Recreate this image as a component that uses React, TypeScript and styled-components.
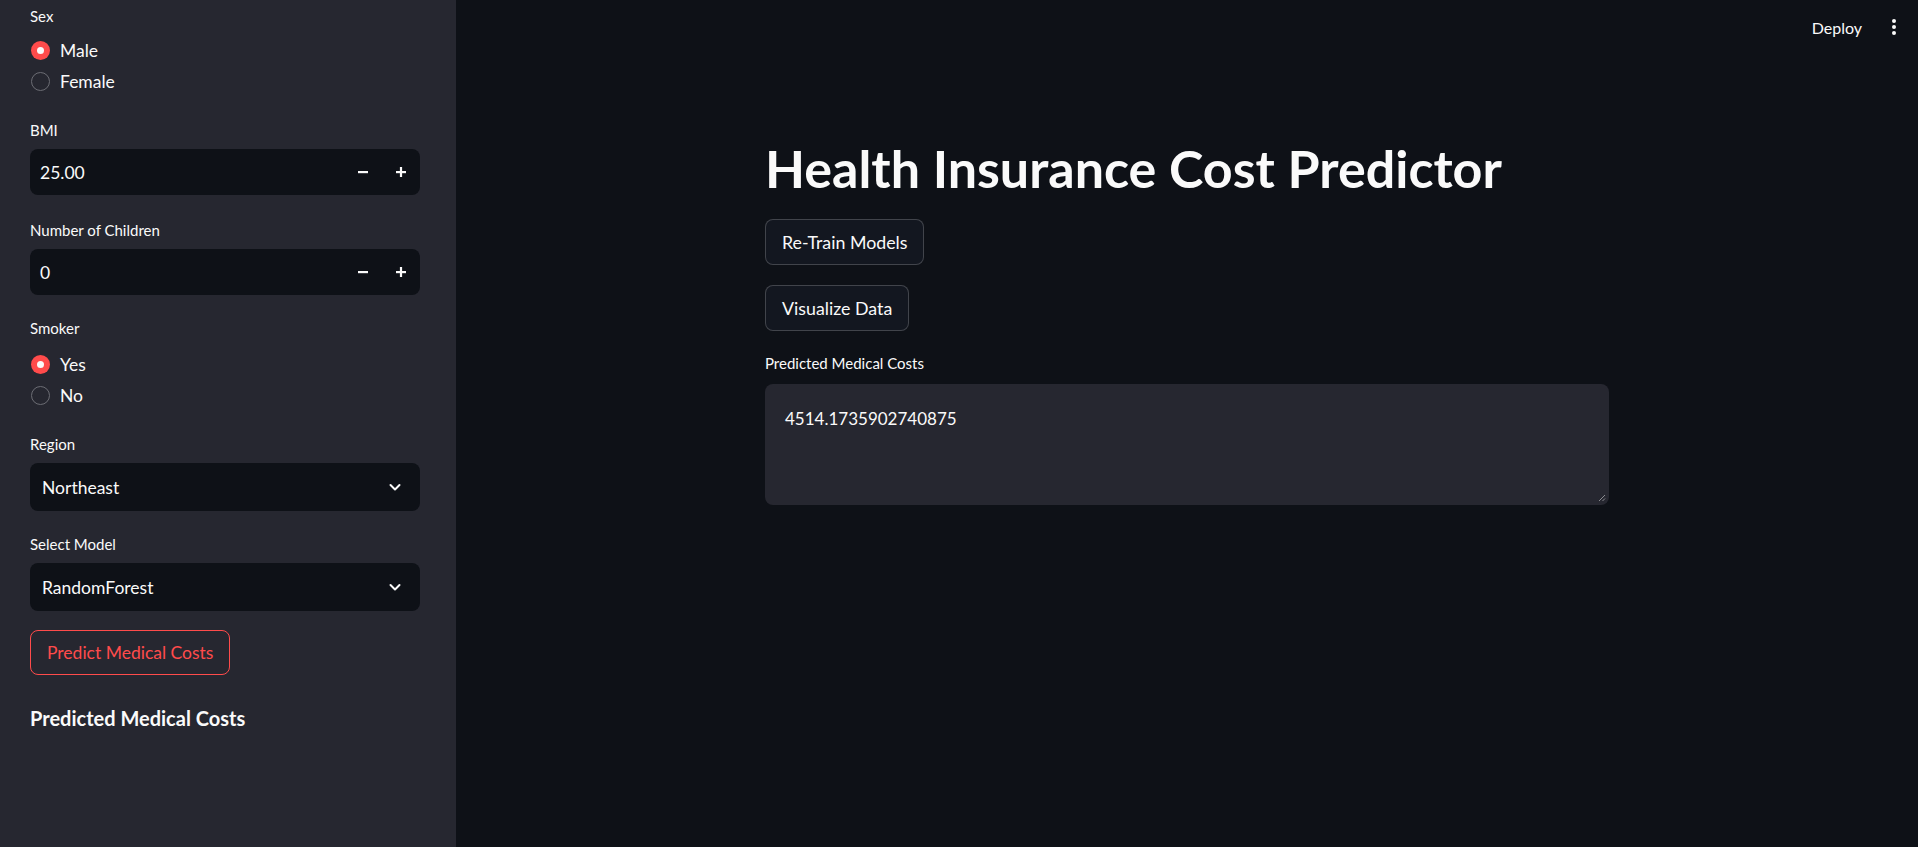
import React from "react";
import styled, { createGlobalStyle } from "styled-components";

const Global = createGlobalStyle`
  html, body { margin: 0; padding: 0; background: #0e1117; }
  body { font-family: Lato, "Noto Sans", sans-serif; color: #fafafa; }
  * { box-sizing: border-box; }
`;

const Page = styled.div`
  display: flex;
  width: 100%;
  height: 847px;
  overflow: hidden;
`;

const Sidebar = styled.aside`
  width: 456px;
  flex-shrink: 0;
  background: #262730;
  padding: 5px 36px 0 30px;
  display: flex;
  flex-direction: column;
  gap: 22px;
`;

const Field = styled.div<{ $gap?: number; $after?: number }>`
  display: flex;
  flex-direction: column;
  gap: ${(p) => p.$gap ?? 8}px;
  margin-bottom: ${(p) => p.$after ?? 0}px;
`;

const Label = styled.div`
  font-size: 15px;
  line-height: 22px;
  height: 22px;
  color: #fafafa;
`;

const RadioList = styled.div`
  display: flex;
  flex-direction: column;
`;

const RadioRow = styled.div`
  display: flex;
  align-items: center;
  gap: 10px;
  height: 31px;
  padding-left: 1px;
  font-size: 17.5px;
`;

const RadioDot = styled.span<{ $on?: boolean }>`
  width: 19px;
  height: 19px;
  border-radius: 50%;
  display: flex;
  align-items: center;
  justify-content: center;
  background: ${(p) => (p.$on ? "#ff4b4b" : "transparent")};
  border: ${(p) => (p.$on ? "none" : "1.5px solid #6c6d74")};
  &::after {
    content: "";
    display: ${(p) => (p.$on ? "block" : "none")};
    width: 7px;
    height: 7px;
    border-radius: 50%;
    background: #fafafa;
  }
`;

const NumberBox = styled.div`
  height: 46px;
  border-radius: 8px;
  background: #0e1117;
  display: flex;
  align-items: center;
  padding-left: 10px;
  font-size: 17.5px;
`;

const NumberValue = styled.span`
  flex: 1;
`;

const StepButton = styled.span`
  width: 38px;
  height: 46px;
  display: flex;
  align-items: center;
  justify-content: center;
`;

const SelectBox = styled.div`
  height: 48px;
  border-radius: 8px;
  background: #0e1117;
  display: flex;
  align-items: center;
  justify-content: space-between;
  padding: 0 18px 0 12px;
  font-size: 17.5px;
`;

const PrimaryOutline = styled.button`
  align-self: flex-start;
  height: 45px;
  margin-top: -3px;
  padding: 0 16px;
  border-radius: 8px;
  border: 1px solid #ff4b4b;
  background: transparent;
  color: #ff4b4b;
  font-family: inherit;
  font-size: 17.5px;
`;

const SideHeading = styled.h3`
  margin: 6px 0 0;
  font-size: 20px;
  font-weight: 700;
  line-height: 30px;
`;

const Main = styled.main`
  flex: 1;
  display: flex;
  flex-direction: column;
  background: #0e1117;
`;

const Header = styled.header`
  height: 54px;
  display: flex;
  align-items: center;
  justify-content: flex-end;
  padding-right: 12px;
  gap: 20px;
`;

const HeaderText = styled.span`
  font-size: 16px;
`;

const Kebab = styled.span`
  width: 24px;
  display: flex;
  justify-content: center;
`;

const Content = styled.div`
  width: 844px;
  margin: 0 auto;
  padding-top: 82px;
  display: flex;
  flex-direction: column;
`;

const Title = styled.h1`
  margin: 0 0 19px;
  font-size: 52px;
  font-weight: 700;
  line-height: 64px;
  letter-spacing: 0;
`;

const GhostButton = styled.button`
  align-self: flex-start;
  height: 46px;
  padding: 0 16px;
  border-radius: 8px;
  border: 1px solid rgba(250, 250, 250, 0.2);
  background: #131720;
  color: #fafafa;
  font-family: inherit;
  font-size: 17.8px;
  margin-bottom: 20px;
`;

const MainLabel = styled.div`
  font-size: 15px;
  line-height: 22px;
  margin: 1px 0 10px;
`;

const TextArea = styled.div`
  position: relative;
  height: 121px;
  border-radius: 8px;
  background: #262730;
  padding: 23px 20px;
  font-size: 17px;
  line-height: 24px;
`;

const Grip = styled.svg`
  position: absolute;
  right: 3px;
  bottom: 3px;
`;

const Minus = () => (
  <svg width="12" height="12" viewBox="0 0 12 12">
    <rect x="1" y="5" width="10" height="2.2" fill="#fafafa" />
  </svg>
);
const Plus = () => (
  <svg width="12" height="12" viewBox="0 0 12 12">
    <rect x="1" y="5" width="10" height="2.2" fill="#fafafa" />
    <rect x="4.9" y="1" width="2.2" height="10" fill="#fafafa" />
  </svg>
);
const Chevron = () => (
  <svg width="14" height="14" viewBox="0 0 14 14">
    <path d="M2.5 5 L7 9.5 L11.5 5" fill="none" stroke="#fafafa" strokeWidth="2" strokeLinecap="round" strokeLinejoin="round" />
  </svg>
);

const NumberInput = ({ value }: { value: string }) => (
  <NumberBox>
    <NumberValue>{value}</NumberValue>
    <StepButton><Minus /></StepButton>
    <StepButton><Plus /></StepButton>
  </NumberBox>
);

const Select = ({ value }: { value: string }) => (
  <SelectBox>
    <span>{value}</span>
    <Chevron />
  </SelectBox>
);

const Radios = ({ options, selected }: { options: string[]; selected: number }) => (
  <RadioList>
    {options.map((o, i) => (
      <RadioRow key={o}>
        <RadioDot $on={i === selected} />
        <span>{o}</span>
      </RadioRow>
    ))}
  </RadioList>
);

export default function App() {
  return (
    <>
      <Global />
      <Page>
        <Sidebar>
          <Field $gap={8}>
            <Label>Sex</Label>
            <Radios options={["Male", "Female"]} selected={0} />
          </Field>
          <Field $after={2}>
            <Label>BMI</Label>
            <NumberInput value="25.00" />
          </Field>
          <Field>
            <Label>Number of Children</Label>
            <NumberInput value="0" />
          </Field>
          <Field $gap={10}>
            <Label>Smoker</Label>
            <Radios options={["Yes", "No"]} selected={0} />
          </Field>
          <Field>
            <Label>Region</Label>
            <Select value="Northeast" />
          </Field>
          <Field>
            <Label>Select Model</Label>
            <Select value="RandomForest" />
          </Field>
          <PrimaryOutline>Predict Medical Costs</PrimaryOutline>
          <SideHeading>Predicted Medical Costs</SideHeading>
        </Sidebar>
        <Main>
          <Header>
            <HeaderText>Deploy</HeaderText>
            <Kebab>
              <svg width="6" height="18" viewBox="0 0 6 18">
                <circle cx="3" cy="3" r="2" fill="#fafafa" />
                <circle cx="3" cy="9" r="2" fill="#fafafa" />
                <circle cx="3" cy="15" r="2" fill="#fafafa" />
              </svg>
            </Kebab>
          </Header>
          <Content>
            <Title>Health Insurance Cost Predictor</Title>
            <GhostButton>Re-Train Models</GhostButton>
            <GhostButton>Visualize Data</GhostButton>
            <MainLabel>Predicted Medical Costs</MainLabel>
            <TextArea>
              4514.1735902740875
              <Grip width="9" height="9" viewBox="0 0 9 9">
                <path d="M8 2 L2 8 M8 5.5 L5.5 8" stroke="#8a8b90" strokeWidth="1" />
              </Grip>
            </TextArea>
          </Content>
        </Main>
      </Page>
    </>
  );
}
